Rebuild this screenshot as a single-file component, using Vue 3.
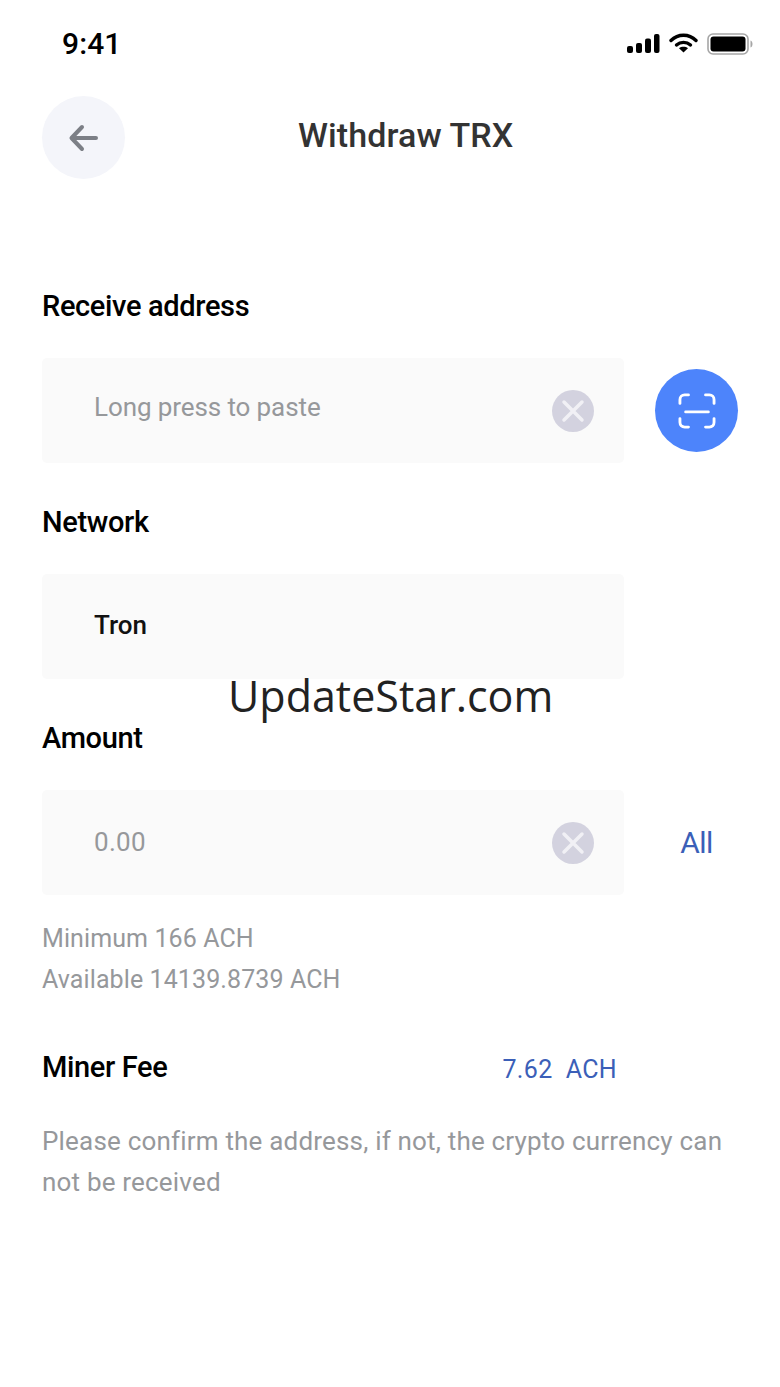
<script setup>
const hint = 'Please confirm the address, if not, the crypto currency can not be received'
</script>

<template>
  <div class="page">
    <div class="status">
      <span class="time">9:41</span>
      <div class="status-icons">
        <svg width="34" height="21" viewBox="0 0 34 21"><rect x="1" y="13" width="6" height="7" rx="2"/><rect x="10" y="10" width="6" height="10" rx="2"/><rect x="19" y="5.500" width="6" height="14.500" rx="2"/><rect x="28" y="1" width="5.500" height="19" rx="2"/></svg>
        <svg width="29" height="21" viewBox="0 0 29 21" class="wifi"><path d="M2 8.500C9 1.500 20 1.500 27 8.500" fill="none" stroke="#000" stroke-width="3.400" stroke-linecap="round"/><path d="M7.500 13C11.500 9.500 17.500 9.500 21.500 13" fill="none" stroke="#000" stroke-width="3.400" stroke-linecap="round"/><path d="M14.500 20.500L10 16.200C12.600 14.300 16.400 14.300 19 16.200Z"/></svg>
        <svg width="46" height="22" viewBox="0 0 46 22"><rect x="1" y="1" width="40" height="20" rx="5" fill="#fff" stroke="#a6a6a6" stroke-width="1.600"/><rect x="3.500" y="3.500" width="35" height="15" rx="3"/><path d="M43.500 7.500c1.500.5 2 2 2 3.500s-.5 3-2 3.500z" fill="#a6a6a6"/></svg>
      </div>
    </div>

    <header class="nav">
      <div class="back">
        <svg width="32" height="28" viewBox="0 0 32 28" fill="none" stroke="#7c7f86" stroke-width="4" stroke-linecap="round" stroke-linejoin="round"><path d="M28 14H4M14 3L3.500 14L14 25"/></svg>
      </div>
      <h1>Withdraw TRX</h1>
    </header>

    <main class="form">
      <h2 class="label first">Receive address</h2>
      <div class="row">
        <div class="field">
          <span class="placeholder">Long press to paste</span>
          <span class="clear"><svg width="24" height="24" viewBox="0 0 24 24" stroke="#f1f0f5" stroke-width="3.500" stroke-linecap="round"><path d="M3 3L21 21M21 3L3 21"/></svg></span>
        </div>
        <div class="side">
          <span class="scan">
            <svg width="38" height="36" viewBox="0 0 40 38" fill="none" stroke="#fff" stroke-width="3" stroke-linecap="round"><path d="M11 2H7C4 2 2 4 2 7V11M29 2H33C36 2 38 4 38 7V11M2 27V31C2 34 4 36 7 36H11M38 27V31C38 34 36 36 33 36H29M8 20H32"/></svg>
          </span>
        </div>
      </div>

      <h2 class="label">Network</h2>
      <div class="row">
        <div class="field"><span class="value">Tron</span></div>
        <div class="side"></div>
      </div>

      <h2 class="label amount">Amount</h2>
      <div class="row">
        <div class="field">
          <span class="placeholder zero">0.00</span>
          <span class="clear"><svg width="24" height="24" viewBox="0 0 24 24" stroke="#f1f0f5" stroke-width="3.500" stroke-linecap="round"><path d="M3 3L21 21M21 3L3 21"/></svg></span>
        </div>
        <div class="side"><span class="all">All</span></div>
      </div>

      <div class="limits">
        <p>Minimum 166 ACH</p>
        <p>Available 14139.8739 ACH</p>
      </div>

      <div class="fee">
        <h2 class="label">Miner Fee</h2>
        <span class="fee-value">7.62&nbsp; ACH</span>
      </div>

      <p class="hint">{{ hint }}</p>
    </main>

    <div class="watermark">UpdateStar.com</div>
  </div>
</template>

<style>
html, body { margin: 0; background: #fff; }
</style>

<style scoped>
.page {
  position: relative;
  width: 780px;
  height: 1387px;
  overflow: hidden;
  background: #fff;
  font-family: Roboto, "Noto Sans", sans-serif;
  box-sizing: border-box;
}
.status {
  height: 88px;
  display: flex;
  justify-content: space-between;
  padding: 27px 27px 0 62px;
  box-sizing: border-box;
}
.time {
  font: 500 30px/34px Roboto, sans-serif;
  color: #000;
  letter-spacing: 0.1px;
}
.status-icons {
  display: flex;
  gap: 9px;
  align-items: flex-start;
  padding-top: 6px;
}
.wifi { margin-top: -1px; }
.nav {
  position: relative;
  height: 84px;
  margin-top: 8px;
  padding-left: 42px;
}
.back {
  width: 83px;
  height: 83px;
  border-radius: 50%;
  background: #f4f5fa;
  display: flex;
  align-items: center;
  justify-content: center;
}
h1 {
  position: absolute;
  left: 298px;
  top: 18px;
  margin: 0;
  font: 500 34px/42px Roboto, sans-serif;
  color: #333;
  white-space: nowrap;
  letter-spacing: 0.1px;
}
.form { padding: 0 42px; margin-top: 107px; }
.label {
  margin: 0;
  font: 500 29px/38px Roboto, sans-serif;
  color: #000;
  letter-spacing: -0.35px;
}
.row {
  display: flex;
  margin-top: 33px;
  margin-bottom: 40px;
}
.field {
  width: 582px;
  height: 105px;
  flex: none;
  display: flex;
  align-items: center;
  justify-content: space-between;
  padding: 0 30px 0 52px;
  box-sizing: border-box;
  background: #fafafa;
  border-radius: 5px;
}
.placeholder {
  font-size: 26px;
  color: #96989b;
  letter-spacing: -0.1px;
  margin-top: -8px;
}
.placeholder.zero { margin-top: -2px; letter-spacing: 0.3px; }
.value {
  font: 500 26px/30px Roboto, sans-serif;
  color: #111;
  margin-top: -4px;
}
.clear {
  width: 42px;
  height: 42px;
  border-radius: 50%;
  background: #d3d2df;
  display: flex;
  align-items: center;
  justify-content: center;
}
.side {
  width: 114px;
  display: flex;
  align-items: center;
  justify-content: flex-end;
}
.scan {
  width: 83px;
  height: 83px;
  border-radius: 50%;
  background: #4d84fb;
  display: flex;
  align-items: center;
  justify-content: center;
}
.all {
  width: 83px;
  text-align: center;
  font-size: 30px;
  letter-spacing: -0.5px;
  color: #3b5fb8;
}
.limits { margin-top: -17px; }
.limits p {
  margin: 0;
  font-size: 25px;
  line-height: 41px;
  color: #96989b;
  letter-spacing: 0.1px;
}
.fee {
  display: flex;
  align-items: center;
  justify-content: space-between;
  width: 575px;
  margin-top: 48px;
}
.fee-value {
  font-size: 25px;
  color: #3b5fb8;
  letter-spacing: 0.35px;
  margin-top: 5px;
}
.hint {
  margin: 35px 0 0;
  width: 696px;
  font-size: 26px;
  line-height: 41px;
  letter-spacing: 0.19px;
  color: #96989b;
}
.watermark {
  position: absolute;
  left: 228px;
  top: 667px;
  font: 400 43px/58px "Open Sans", sans-serif;
  color: #222;
}
</style>
